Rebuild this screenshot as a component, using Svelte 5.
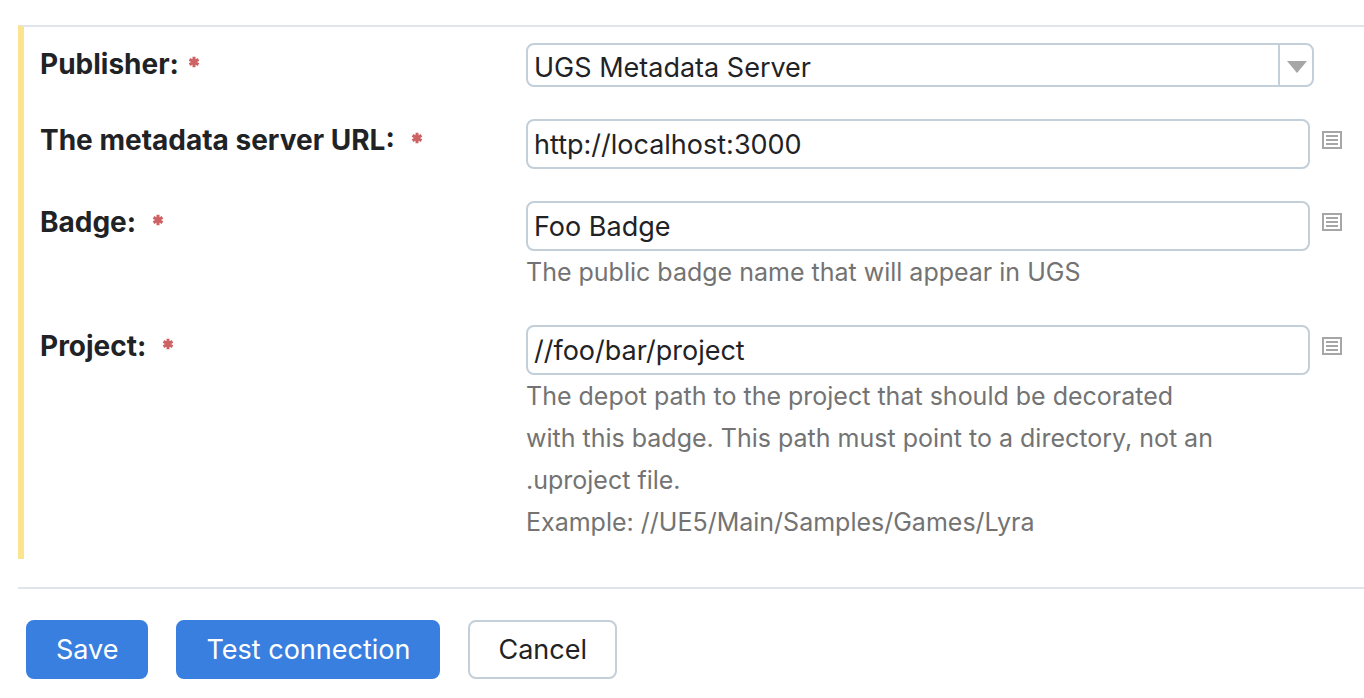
<script>
  let publisher = $state('UGS Metadata Server');
  let fields = $state([
    { id: 'url', label: 'The metadata server URL:', value: 'http://localhost:3000', note: [] },
    { id: 'badge', label: 'Badge:', value: 'Foo Badge', note: ['The public badge name that will appear in UGS'] },
    {
      id: 'project',
      label: 'Project:',
      value: '//foo/bar/project',
      note: [
        'The depot path to the project that should be decorated with this badge. This path must point to a directory, not an .uproject file.',
        'Example: //UE5/Main/Samples/Games/Lyra'
      ]
    }
  ]);
</script>

{#snippet star()}
  <svg class="star" viewBox="0 0 12 12" aria-hidden="true">
    <path d="M6 0.8V11.2M1.5 3.4L10.5 8.6M10.5 3.4L1.5 8.6" />
  </svg>
{/snippet}

<form onsubmit={(e) => e.preventDefault()}>
  <div class="settings">
    <div class="row">
      <label for="publisher">Publisher:{@render star()}</label>
      <div class="select">
        <select id="publisher" bind:value={publisher}>
          <option>UGS Metadata Server</option>
        </select>
        <span class="arrow"></span>
      </div>
    </div>
    {#each fields as field (field.id)}
      <div class="row">
        <label class="wide" for={field.id}>{field.label}{@render star()}</label>
        <div class="control">
          <div class="line">
            <input id={field.id} type="text" bind:value={field.value} />
            <button type="button" class="params" aria-label="Insert parameter">
              <svg viewBox="0 0 20 18" aria-hidden="true">
                <path d="M1 1H19V17H1ZM4 5H16M4 9H16M4 13H16" />
              </svg>
            </button>
          </div>
          {#if field.note.length}
            <div class="note">
              {#each field.note as line}<p>{line}</p>{/each}
            </div>
          {/if}
        </div>
      </div>
    {/each}
  </div>
  <div class="actions">
    <button type="submit" class="btn primary">Save</button>
    <button type="button" class="btn primary">Test connection</button>
    <button type="button" class="btn">Cancel</button>
  </div>
</form>

<style>
  :global(body) {
    background: #fff;
  }
  form {
    padding: 25px 0 16px 18px;
    font-family: Inter, sans-serif;
    font-size: 27px;
    color: #1f2326;
  }
  .settings {
    border-top: 2px solid #dfe5eb;
    border-left: 6px solid #fae48f;
    padding: 16px 20px 16px 16px;
  }
  .row {
    display: grid;
    grid-template-columns: 486px 1fr;
    align-items: start;
    margin-bottom: 32px;
  }
  .row:last-child {
    margin-bottom: 0;
  }
  label {
    font-size: 28px;
    font-weight: 700;
    line-height: 42px;
  }
  .star {
    width: 12px;
    height: 12px;
    margin: 0 0 6px 9px;
    fill: none;
    stroke: #cd6163;
    stroke-width: 3;
  }
  .wide .star {
    margin-left: 16px;
  }
  .select {
    position: relative;
    margin-right: 30px;
  }
  select,
  input {
    display: block;
    box-sizing: border-box;
    width: 100%;
    margin: 0;
    padding: 0 6px;
    border: 2px solid #c3cfd9;
    border-radius: 8px;
    background: #fff;
    font: inherit;
    color: inherit;
    outline: 0;
  }
  select {
    height: 44px;
    padding-top: 4px;
    appearance: none;
  }
  input {
    height: 50px;
    flex: 1;
    min-width: 0;
  }
  .arrow {
    position: absolute;
    top: 2px;
    right: 2px;
    bottom: 2px;
    width: 32px;
    border-left: 2px solid #c3cfd9;
    pointer-events: none;
  }
  .arrow::after {
    content: '';
    position: absolute;
    top: 16px;
    left: 7px;
    border: 10px solid transparent;
    border-top: 12px solid #a6a6a6;
    border-bottom: 0;
  }
  .line {
    display: flex;
    align-items: flex-start;
    gap: 12px;
  }
  .params {
    width: 22px;
    padding: 12px 0 0;
    border: 0;
    background: none;
  }
  .params svg {
    display: block;
    width: 20px;
    height: 18px;
    fill: none;
    stroke: #a6a6a6;
    stroke-width: 2;
  }
  .note {
    max-width: 700px;
    font-size: 25px;
    line-height: 42px;
    color: #737373;
  }
  .note p {
    margin: 0;
  }
  .actions {
    display: flex;
    gap: 28px;
    margin-top: 28px;
    padding: 31px 8px 0;
    border-top: 2px solid #dfe5eb;
  }
  .btn {
    height: 59px;
    padding: 0 28px;
    border: 2px solid #c3cfd9;
    border-radius: 8px;
    background: #fff;
    font: inherit;
    color: inherit;
  }
  .primary {
    border-color: #387fe0;
    background: #387fe0;
    color: #fff;
  }
</style>
